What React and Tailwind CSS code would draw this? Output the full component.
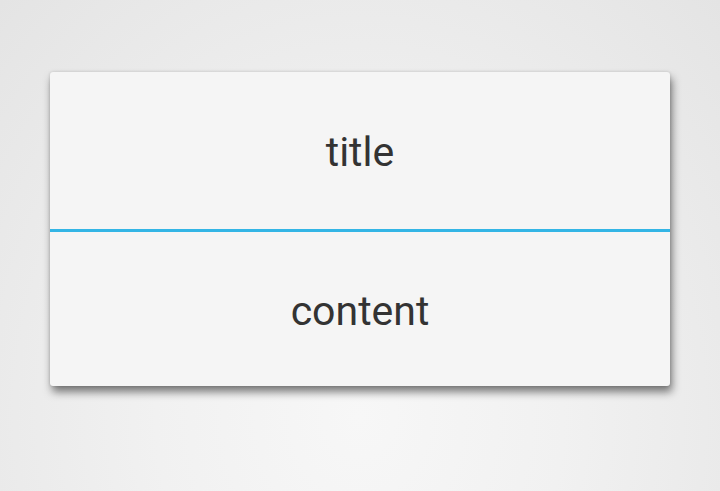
export default function App() {
  return (
    <main
      className="flex h-[491px] w-[720px] items-start justify-center bg-[radial-gradient(ellipse_at_50%_85%,#f7f7f7_0%,#f1f1f1_40%,#e4e4e4_100%)] pt-[72px]"
      style={{ fontFamily: "Roboto, 'Noto Sans', sans-serif" }}
    >
      <div className="flex h-[314px] w-[620px] flex-col rounded-[3px] bg-[#f5f5f5] shadow-[2px_6px_9px_rgba(0,0,0,0.5),0_0_3px_rgba(0,0,0,0.15)]">
        <div className="flex h-[157px] items-center justify-center pt-[4px] text-[41px] text-[#333333]">
          title
        </div>
        <div className="h-[3px] bg-[#33b5e5]" />
        <div className="flex flex-1 items-center justify-center pt-[6px] text-[41px] text-[#333333]">
          content
        </div>
      </div>
    </main>
  );
}
